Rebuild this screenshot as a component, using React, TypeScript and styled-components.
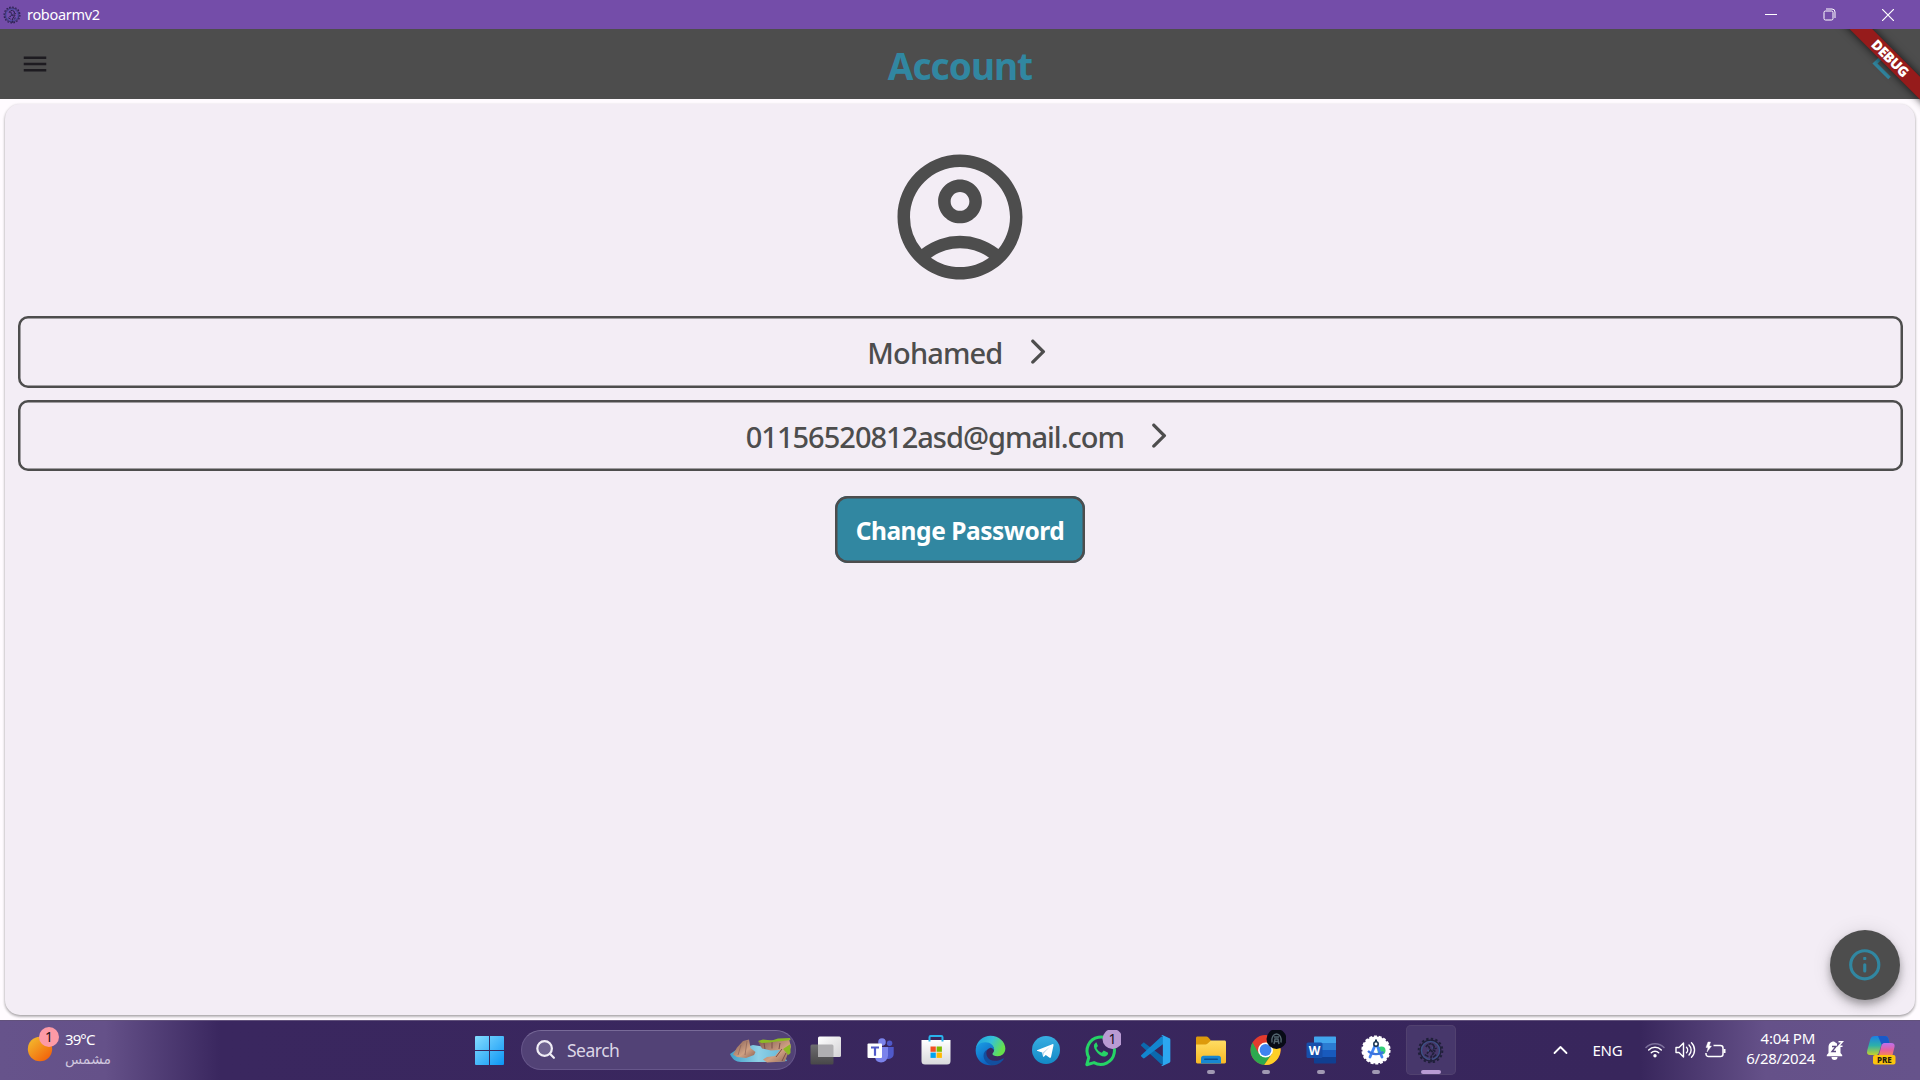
import React from "react";
import styled, { createGlobalStyle } from "styled-components";

const INK = "#4d4d4d";
const TEAL = "#3187a1";

const GlobalStyle = createGlobalStyle`
  * { box-sizing: border-box; }
  body { margin: 0; background: #fef7ff; overflow: hidden; }
  svg { display: block; flex: none; }
  button { font: inherit; color: inherit; background: none; border: 0; padding: 0; }
`;

const Desktop = styled.div`
  width: 1920px;
  height: 1080px;
  display: flex;
  flex-direction: column;
  font-family: "Noto Sans", "Open Sans", sans-serif;
  overflow: hidden;
`;

/* ---------- window title bar ---------- */
const TitleBar = styled.header`
  height: 29px;
  flex: none;
  display: flex;
  align-items: center;
  background: #744da9;
  color: #fff;
  padding: 0 3px;
`;
const WindowTitle = styled.span`
  flex: 1;
  margin-left: 6px;
  font-size: 14.5px;
  letter-spacing: -0.3px;
  line-height: 29px;
`;
const WindowButton = styled.button`
  width: 58.5px;
  height: 29px;
  display: grid;
  place-items: center;
`;

/* ---------- application ---------- */
const AppWindow = styled.div`
  flex: 1;
  position: relative;
  display: flex;
  flex-direction: column;
  background: #fffbff;
  overflow: hidden;
`;
const AppBar = styled.div`
  height: 70px;
  flex: none;
  display: grid;
  grid-template-columns: 70px 1fr 70px;
  align-items: center;
  background: ${INK};
`;
const AppBarButton = styled.button`
  height: 70px;
  display: grid;
  place-items: center;
`;
const PageTitle = styled.h1`
  margin: 0;
  padding-top: 3px;
  text-align: center;
  font-size: 37px;
  font-weight: 700;
  line-height: 50px;
  letter-spacing: -0.95px;
  color: ${TEAL};
`;
const Card = styled.main`
  flex: 1;
  margin: 4.5px 5px 5px;
  padding: 38.5px 12.5px 0;
  border-radius: 15px;
  background: #f3edf5;
  box-shadow: 0 1px 3px rgba(0, 0, 0, 0.28), 0 2px 3px rgba(0, 0, 0, 0.16);
  display: flex;
  flex-direction: column;
  align-items: center;
`;
const FieldList = styled.div`
  align-self: stretch;
  margin-top: 24.25px;
  display: flex;
  flex-direction: column;
  gap: 12.5px;
`;
const FieldRow = styled.button`
  height: 71.25px;
  display: flex;
  justify-content: center;
  align-items: center;
  gap: 19px;
  border-radius: 10px;
  box-shadow: inset 0 0 0 2.5px ${INK};
`;
const FieldText = styled.span<{ $tracking: number }>`
  padding-top: 2px;
  font-size: 29px;
  font-weight: 500;
  line-height: 40px;
  letter-spacing: ${(p) => p.$tracking}px;
  color: ${INK};
`;
const PasswordButton = styled.button`
  margin-top: 25px;
  padding-top: 2px;
  width: 250px;
  height: 66.25px;
  border-radius: 12.5px;
  background: ${TEAL};
  box-shadow: inset 0 0 0 2.5px ${INK};
  color: #fff;
  font-size: 24.5px;
  font-weight: 700;
  letter-spacing: -0.45px;
`;
const InfoButton = styled.button`
  position: absolute;
  right: 20px;
  bottom: 20px;
  width: 70px;
  height: 70px;
  border-radius: 50%;
  display: grid;
  place-items: center;
  background: ${INK};
  box-shadow: 0 4px 6px rgba(0, 0, 0, 0.2), 0 7px 12px rgba(0, 0, 0, 0.14), 0 1px 20px rgba(0, 0, 0, 0.1);
`;
const DebugRibbon = styled.div`
  position: absolute;
  top: 21.5px;
  right: -46px;
  width: 150px;
  height: 15.5px;
  padding-right: 2px;
  transform: rotate(45deg);
  background: #961b1b;
  box-shadow: 0 0 8px rgba(0, 0, 0, 0.75);
  color: #fff;
  text-align: center;
  font-size: 14px;
  font-weight: 900;
  letter-spacing: -0.5px;
  line-height: 15.5px;
`;

/* ---------- taskbar ---------- */
const Taskbar = styled.footer`
  height: 60px;
  flex: none;
  display: flex;
  align-items: center;
  border-top: 1px solid #62527c;
  background: linear-gradient(90deg, #66538b 0, #655189 105px, #3a275f 220px, #38265c 1640px, #655189 1765px, #66538b 1920px);
  color: #fff;
`;
const Weather = styled.div`
  width: 469px;
  padding-left: 27px;
  display: flex;
  align-items: center;
  gap: 6px;
  > svg { margin-bottom: 13px; }
`;
const TwoLines = styled.div<{ $end?: boolean }>`
  display: flex;
  flex-direction: column;
  align-items: ${(p) => (p.$end ? "flex-end" : "flex-start")};
  padding-bottom: 4px;
  font-size: 15px;
  line-height: 20px;
  letter-spacing: -0.28px;
`;
const Temperature = styled.span`
  font-size: 15px;
  letter-spacing: -0.9px;
`;
const Condition = styled.span`
  font-family: "DejaVu Sans", sans-serif;
  font-size: 14px;
  letter-spacing: 0;
  color: #cfc6de;
`;
const StartButton = styled.button`
  width: 40px;
  height: 50px;
  display: grid;
  place-items: center;
`;
const SearchBox = styled.div`
  width: 275px;
  height: 40px;
  margin: 0 8.5px 1px 12px;
  padding: 0 3px 0 14px;
  display: flex;
  align-items: center;
  border-radius: 20px;
  border: 1px solid #66568a;
  border-top-color: #786a98;
  background: #524276;
`;
const SearchLabel = styled.span`
  flex: 1;
  margin-left: 11px;
  font-size: 17.5px;
  letter-spacing: -0.5px;
  color: #dcd6e6;
`;
const AppStrip = styled.nav`
  display: flex;
  gap: 5px;
  margin: 0 0 1px -4px;
`;
const AppSlot = styled.button<{ $active?: boolean; $running?: boolean }>`
  position: relative;
  width: 50px;
  height: 50px;
  display: grid;
  place-items: center;
  border-radius: 5px;
  background: ${(p) => (p.$active ? "#47376b" : "transparent")};
  box-shadow: ${(p) => (p.$active ? "inset 0 0 0 1px #51416f" : "none")};
  &::after {
    content: "";
    display: ${(p) => (p.$active || p.$running ? "block" : "none")};
    position: absolute;
    bottom: 1px;
    left: 50%;
    transform: translateX(-50%);
    width: ${(p) => (p.$active ? 20 : 8)}px;
    height: 4px;
    border-radius: 2px;
    background: ${(p) => (p.$active ? "#b99bd3" : "#a199b3")};
  }
`;
const Tray = styled.div`
  flex: 1;
  display: flex;
  align-items: center;
  justify-content: flex-end;
  padding: 0 24px 2px 0;
`;
const Language = styled.span`
  margin: 0 23px 0 25px;
  font-size: 15px;
  letter-spacing: -0.3px;
`;
const TrayIcons = styled.div`
  display: flex;
  align-items: center;
  gap: 9.5px;
  margin-right: 20px;
`;
const TrayEnd = styled.div`
  display: flex;
  align-items: center;
  gap: 22px;
  margin-left: 11px;
`;

/* ---------- drawings ---------- */
const RobotGear = ({ size, ring = "#3a5689", body = "#20203a" }: { size: number; ring?: string; body?: string }) => (
  <svg width={size} height={size} viewBox="0 0 26 26" fill="none">
    <circle cx="13" cy="13" r="11.4" stroke={body} strokeWidth="1.9" strokeDasharray="2.3 2.17" />
    <circle cx="13" cy="13" r="10" stroke={body} strokeWidth="1.1" />
    <circle cx="13" cy="13" r="8.700" stroke={ring} strokeWidth="1.1" />
    <path d="M8.500 9.500l2.500-2.500 3-.8 2.600 2.300M11 8.500l2 4-3.500 3.500M16.600 8.500l-.8 4 2 1.800M13 12.500l3 3-2.500 3.500v5.500" stroke={body} strokeWidth="1.600" strokeDasharray="3 0.6" />
    <path d="M7.500 17l3.500 2M18.500 17l-3 2.600M17 11.500l2-.8" stroke={body} strokeWidth="1.400" />
    <path d="M10 12.500l1.500 1M14.500 10l1 1" stroke={ring} strokeWidth="1" />
  </svg>
);

const Chevron = () => (
  <svg width="31.25" height="31.25" viewBox="0 0 24 24" fill={INK}>
    <path d="M7.38 21.01c.49.49 1.28.49 1.77 0l8.31-8.31c.39-.39.39-1.02 0-1.41L9.15 2.98c-.49-.49-1.28-.49-1.77 0s-.49 1.28 0 1.77L14.62 12l-7.25 7.25c-.48.48-.48 1.28.01 1.76z" />
  </svg>
);

const SunIcon = () => (
  <svg width="32" height="36" viewBox="0 0 32 36">
    <defs>
      <linearGradient id="sun" x1="0.1" y1="0.1" x2="0.8" y2="0.9">
        <stop offset="0" stopColor="#f3b72c" />
        <stop offset="1" stopColor="#f2660c" />
      </linearGradient>
    </defs>
    <circle cx="13" cy="23" r="12.2" fill="url(#sun)" />
    <circle cx="22" cy="11" r="10" fill="#fd9aa6" />
    <text x="22" y="16" fontSize="14" textAnchor="middle" fill="#1d1014">1</text>
  </svg>
);

const StartIcon = () => (
  <svg width="29" height="29" viewBox="0 0 29 29">
    <defs>
      <linearGradient id="win" x1="0" y1="0" x2="1" y2="1" gradientUnits="objectBoundingBox">
        <stop offset="0" stopColor="#84dcff" />
        <stop offset="1" stopColor="#0c95f5" />
      </linearGradient>
    </defs>
    <path d="M1 0h13v14H0V1a1 1 0 0 1 1-1zM15 0h13a1 1 0 0 1 1 1v13H15zM0 15h14v14H1a1 1 0 0 1-1-1zM15 15h14v13a1 1 0 0 1-1 1H15z" fill="url(#win)" />
  </svg>
);

const SearchIcon = () => (
  <svg width="20" height="20" viewBox="0 0 20 20" fill="none" stroke="#f1eef6" strokeWidth="2.2" strokeLinecap="round">
    <circle cx="8.600" cy="8.500" r="7.300" fill="#6f6390" />
    <path d="M13.900 13.800l4 4" />
  </svg>
);

const RiverArt = () => (
  <svg width="63" height="26" viewBox="0 0 63 26">
    <defs>
      <linearGradient id="river" x1="0" x2="1">
        <stop offset="0" stopColor="#3f9fc9" />
        <stop offset="0.5" stopColor="#8fd0e6" />
        <stop offset="1" stopColor="#5cb4d6" />
      </linearGradient>
      <linearGradient id="rock" x1="0" x2="1" y2="1">
        <stop offset="0" stopColor="#7c5750" />
        <stop offset="0.6" stopColor="#d0a183" />
        <stop offset="1" stopColor="#8d6255" />
      </linearGradient>
    </defs>
    <path d="M1 17l6-4 17-5 12 2 16 2 6 12-10 1H12C7 25 3 22 1 17z" fill="url(#river)" />
    <path d="M4 17.500l4-7L14 4l6-1.500L21.500 11l5 4-1.500 3-8 3-9-1z" fill="url(#rock)" />
    <path d="M12 8l-3 10M18 4l-2 14" stroke="#8a6157" strokeWidth="0.700" />
    <path d="M29 4.500l9-1 22-1.500 2 8-4 9-2 5.500-18 1-4-3 4-2.500 8-1 5-6-9 .5-9-2z" fill="url(#rock)" />
    <path d="M35 6l1 6M43 5v6.500M51 6l-1 6M53 12l-6 8M57 16l-4 8" stroke="#7a5049" strokeWidth="1" />
    <path d="M29 4l5-1.500 9 1 6-2 12-.5.5 2-8 1-6 .5-7 1-8 .5zM54 12l7.500-5v9l-2 2z" fill="#8cba24" />
  </svg>
);

const TaskViewIcon = () => (
  <svg width="31" height="29" viewBox="0 0 31 29">
    <defs>
      <linearGradient id="tvb" x2="0" y2="1"><stop stopColor="#6e6d70" /><stop offset="1" stopColor="#484749" /></linearGradient>
      <linearGradient id="tvf" x2="1" y2="1"><stop stopColor="#fff" /><stop offset="1" stopColor="#d3d2d5" /></linearGradient>
    </defs>
    <rect x="0.5" y="8.5" width="23" height="20" rx="1.5" fill="url(#tvb)" />
    <rect x="8" y="0.5" width="23" height="20.5" rx="1.5" fill="url(#tvf)" />
    <path d="M8 8.5h14a1.5 1.5 0 0 1 1.5 1.5v11H9.5A1.5 1.5 0 0 1 8 19.500z" fill="#b0afb2" />
  </svg>
);

const TeamsIcon = () => (
  <svg width="27" height="25" viewBox="0 0 27 25">
    <circle cx="22.6" cy="5.2" r="2.7" fill="#5059c9" />
    <path d="M17 9h9.700v7a5 5 0 0 1-5 5H17z" fill="#5059c9" />
    <circle cx="15" cy="4" r="3.800" fill="#7b83eb" />
    <path d="M8 9h13v8.500a7 7 0 0 1-7 7 6.500 6.500 0 0 1-6-5z" fill="#7b83eb" />
    <rect x="0.500" y="5.500" width="14.500" height="14.500" rx="1" fill="#fff" />
    <path d="M4 8.500h8v2.100H9.100v7.100H6.900v-7.100H4z" fill="#5059c9" />
  </svg>
);

const StoreIcon = () => (
  <svg width="30" height="30" viewBox="0 0 30 30">
    <defs><linearGradient id="st" x2="0" y2="1"><stop stopColor="#fff" /><stop offset="1" stopColor="#d8d9dc" /></linearGradient></defs>
    <path d="M0.500 5h29v21a3.500 3.500 0 0 1-3.500 3.500H4A3.500 3.500 0 0 1 .5 26z" fill="url(#st)" />
    <path d="M8.500 6.500V2.200c0-.7.5-1.200 1.200-1.200h10.600c.7 0 1.200.5 1.200 1.200v4.300" fill="none" stroke="#29b3ec" strokeWidth="2" />
    <path d="M9.500 11.500h5.300v5.300H9.500z" fill="#f25022" />
    <path d="M15.600 11.500h5.300v5.300h-5.300z" fill="#7fba00" />
    <path d="M9.500 17.600h5.300v5.300H9.500z" fill="#00a4ef" />
    <path d="M15.600 17.600h5.300v5.300h-5.300z" fill="#ffb900" />
  </svg>
);

const EdgeIcon = () => (
  <svg width="31" height="31" viewBox="0 0 24 24">
    <defs>
      <linearGradient id="eg1" x1="0" x2="1" y2="0.4"><stop stopColor="#1d9de2" /><stop offset="0.55" stopColor="#35c1d8" /><stop offset="1" stopColor="#66e04b" /></linearGradient>
      <linearGradient id="eg2" x1="0" x2="0.6" y2="1"><stop stopColor="#1ba0e6" /><stop offset="1" stopColor="#0c5dbd" /></linearGradient>
    </defs>
    <path d="M.6 10.500C1.500 4.300 6.400.5 12 .5 18.500.5 23.500 5.200 23.500 10.500c0 3.700-2.800 6-6 6-2.600 0-4-.9-4-1.700 0-.7 1.300-1.300 1.300-3.300 0-2.800-2.800-5-6.300-5-3.500 0-6.500 1.500-7.900 4z" fill="url(#eg1)" />
    <path d="M.5 12c0-3.700 3.500-6.300 7.500-6.300 4 0 6.800 2.600 6.800 5.500 0 .3 0 .5-.1.800-.6-1.500-2-2.400-3.200-2-2.400.7-3.800 3.300-3.400 6.400.4 3.200 2.800 5.700 5.800 6.900C6.800 24.500.5 19.500.5 12z" fill="url(#eg2)" />
    <path d="M9.300 11.500c-1.600 3.500.4 8.500 6 8.500 2.500 0 4.600-.8 6.400-1.900.4-.2.7.2.4.6-2 3-5.200 4.800-8.600 4.800-4.200-1-6.900-4-6.900-7.400 0-2 1-3.700 2.700-4.600z" fill="#134f9f" />
  </svg>
);

const TelegramIcon = () => (
  <svg width="28" height="28" viewBox="0 0 24 24">
    <defs><linearGradient id="tg" x2="0" y2="1"><stop stopColor="#38aee2" /><stop offset="1" stopColor="#1389c6" /></linearGradient></defs>
    <circle cx="12" cy="12" r="12" fill="url(#tg)" />
    <path d="M4.800 11.900L17.400 7c.7-.2 1.200.2 1 1.100l-2.100 9.900c-.2.700-.6.900-1.200.6l-3.300-2.400-1.600 1.500c-.4.300-.8.200-.8-.3l-.7-3.300-3.900-1.200c-.7-.3-.7-.7 0-1z" fill="#fff" />
    <path d="M9 14.300l6.500-5.200-5.300 5.700-.4 2.400z" fill="#b8d6e9" />
  </svg>
);

const WhatsAppIcon = () => (
  <svg width="40" height="40" viewBox="0 0 40 40">
    <path d="M5.800 34.700l2-7.300a13.700 13.700 0 1 1 5.200 5.200z" fill="none" stroke="#25d366" strokeWidth="3" strokeLinejoin="round" />
    <path d="M14.200 13.200c-1.900 1.500-1.700 4.200.6 7.500 2.700 4 6.600 6.300 9.300 5.700 2.200-.4 3.100-2 3-3.600l-4.400-2.200-1.900 2.200c-2.400-.9-4.300-2.700-5.400-4.900l1.500-1.900-1.400-3.400c-.4-.4-.9-.1-1.300.6z" fill="#25d366" />
    <circle cx="31.500" cy="9" r="10" fill="#b99bd3" />
    <text x="31.500" y="14" fontSize="14" textAnchor="middle" fill="#171020">1</text>
  </svg>
);

const CodeIcon = () => (
  <svg width="31" height="31" viewBox="0 0 24 24">
    <path d="M1 7.300l1.300-1.200c.4-.3.900-.3 1.300 0L18 17v5.700c-.8.300-1.500.1-2-.4L.9 8.400c-.3-.4-.3-.8.1-1.100z" fill="#0b69ae" />
    <path d="M1 16.700l1.300 1.200c.4.300.9.300 1.300 0L18 7V1.300c-.8-.3-1.500-.1-2 .4L.9 15.600c-.3.400-.3.800.1 1.100z" fill="#1286cf" />
    <path d="M17.800.2l5 2.400c.5.200.7.600.7 1.100v16.600c0 .5-.2.900-.7 1.100l-5 2.400c-.6.300-1.300.1-1.800-.4.700.5 1.700 0 1.700-.9V1.500c0-.9-1-1.400-1.700-.9.500-.5 1.200-.7 1.800-.4z" fill="#2ca7f0" />
  </svg>
);

const FolderIcon = () => (
  <svg width="30" height="28" viewBox="0 0 30 28">
    <defs><linearGradient id="fo" x2="0" y2="1"><stop stopColor="#ffdd63" /><stop offset="1" stopColor="#f8b925" /></linearGradient></defs>
    <path d="M0 2C0 1 .6.500 1.500.500h9c.6 0 1 .2 1.400.6L15 4.500V11H0z" fill="#dd9a0c" />
    <path d="M0 8.500h9.500c.8 0 1.300-.2 1.900-.8L15 4.500h13.500c.9 0 1.500.6 1.500 1.500v20c0 .8-.6 1.400-1.500 1.400h-27C.6 27.400 0 26.800 0 26z" fill="url(#fo)" />
    <path d="M5 27.400v-5c0-1.600 1-2.600 2.600-2.600h14.800c1.600 0 2.600 1 2.600 2.600v5z" fill="#1787d2" />
    <rect x="8" y="22.500" width="14" height="1.500" rx="0.700" fill="#0b4f90" />
  </svg>
);

const ChromeIcon = () => (
  <svg width="40" height="40" viewBox="0 0 40 40">
    <circle cx="19.500" cy="20" r="15" fill="#e33b2e" />
    <path d="M6.500 12.500a15 15 0 0 0 11.700 22.450L26 23.750 13 23.750z" fill="#2da94f" />
    <path d="M32.500 12.500a15 15 0 0 1-14.300 22.450L26 23.750 19.500 12.500z" fill="#fdd028" />
    <circle cx="19.500" cy="20" r="7.500" fill="#fff" />
    <circle cx="19.500" cy="20" r="5.900" fill="#3f83f0" />
    <circle cx="30.500" cy="9" r="10" fill="#070b16" />
    <path d="M26 12.500c-1-5 1.500-8.500 4.500-8.500s5.500 3.500 4.500 8.500M28 14l1-5h3l1 5M29 11.500h3M28 7h5" fill="none" stroke="#52656f" strokeWidth="1.400" />
  </svg>
);

const WordIcon = () => (
  <svg width="30" height="28" viewBox="0 0 30 28">
    <path d="M8 1.500C8 .8 8.500.500 9 .500h20c.6 0 1 .4 1 1V7H8z" fill="#41a5ee" />
    <path d="M8 7h22v7H8z" fill="#2b7cd3" />
    <path d="M8 14h22v7H8z" fill="#185abd" />
    <path d="M8 21h22v5.500c0 .6-.4 1-1 1H9c-.6 0-1-.4-1-1z" fill="#103f91" />
    <rect x="0.500" y="6.500" width="16" height="15.500" rx="1.500" fill="#174fab" />
    <text x="8.500" y="18.500" fontSize="12" fontWeight="700" textAnchor="middle" fill="#fff">W</text>
  </svg>
);

const StudioIcon = () => (
  <svg width="30" height="30" viewBox="0 0 30 30">
    <circle cx="15" cy="15" r="13.600" fill="#fff" />
    <circle cx="15" cy="15" r="13.700" fill="none" stroke="#fff" strokeWidth="1.800" strokeDasharray="3 1.780" />
    <circle cx="20.500" cy="15.500" r="4" fill="#35cf78" />
    <path d="M14 10.500L9 22M16 10.500L21 22" stroke="#4285f4" strokeWidth="2.800" strokeLinecap="round" />
    <path d="M7 16c4 4 11 4 15.500 1" fill="none" stroke="#3b74dd" strokeWidth="2.200" />
    <path d="M15 4.500v3" stroke="#16324f" strokeWidth="2" />
    <circle cx="15" cy="9" r="2.200" fill="#fff" stroke="#16324f" strokeWidth="1.500" />
  </svg>
);

const CopilotIcon = () => (
  <svg width="30" height="30" viewBox="0 0 30 30">
    <defs>
      <linearGradient id="cp1" x2="0" y2="1"><stop stopColor="#1c7fe4" /><stop offset="0.5" stopColor="#2cb0a9" /><stop offset="1" stopColor="#c4d22c" /></linearGradient>
      <linearGradient id="cp2" x2="0" y2="1"><stop stopColor="#bc70ef" /><stop offset="0.6" stopColor="#e7609c" /><stop offset="1" stopColor="#f4835c" /></linearGradient>
    </defs>
    <path d="M9 1h10c2 0 3 1 3.500 3l1 4h-5c-2 0-3 1-3.500 3l-2.300 7c-.6 1.500-1.500 2-3 2H4.500c-3 0-4-1.500-3.300-4.500l3-11C5 2 6.500 1 9 1z" fill="url(#cp1)" />
    <path d="M12 1h7c2 0 3 1 3.500 3l1 4h-5l-3 1.500z" fill="#1a59c8" />
    <path d="M18.500 8H25c3 0 4 1.500 3.500 4l-2 8H13l2.200-8.500c.6-2.200 1.400-3.500 3.300-3.500z" fill="url(#cp2)" />
    <rect x="7" y="20" width="22.500" height="9.500" rx="2" fill="#fcc40d" />
    <text x="18.300" y="27.600" fontSize="8" fontWeight="800" textAnchor="middle" fill="#241b10">PRE</text>
  </svg>
);

export default function App() {
  return (
    <Desktop>
      <GlobalStyle />
      <TitleBar>
        <RobotGear size={18} ring="#3d4ea4" body="#2c2350" />
        <WindowTitle>roboarmv2</WindowTitle>
        <WindowButton aria-label="Minimize">
          <svg width="12" height="12" viewBox="0 0 12 12"><path d="M0 5h12v1H0z" fill="#fff" /></svg>
        </WindowButton>
        <WindowButton aria-label="Restore">
          <svg width="13" height="13" viewBox="0 0 13 13" fill="none" stroke="#fff">
            <rect x="1" y="3" width="9" height="9" rx="1.500" />
            <path d="M3 1h6a3 3 0 0 1 3 3v6" />
          </svg>
        </WindowButton>
        <WindowButton aria-label="Close">
          <svg width="12" height="12" viewBox="0 0 12 12" stroke="#fff" strokeWidth="1.200"><path d="M0 0l12 12M12 0L0 12" /></svg>
        </WindowButton>
      </TitleBar>

      <AppWindow>
        <AppBar>
          <AppBarButton aria-label="Menu">
            <svg width="30" height="30" viewBox="0 0 24 24" fill="#1d1b20"><path d="M3 18h18v-2H3v2zm0-5h18v-2H3v2zm0-7v2h18V6H3z" /></svg>
          </AppBarButton>
          <PageTitle>Account</PageTitle>
          <AppBarButton aria-label="Back">
            <svg width="30" height="36" viewBox="0 0 30 36" fill="none" stroke={TEAL} strokeWidth="3.600"><path d="M21.500 2L5 17.500 19.500 32" /></svg>
          </AppBarButton>
        </AppBar>
        <Card>
          <svg width="150" height="150" viewBox="0 0 24 24" fill={INK} fillRule="evenodd">
            <path d="M12 2C6.480 2 2 6.480 2 12s4.480 10 10 10 10-4.480 10-10S17.520 2 12 2zM7.350 18.500C8.660 17.560 10.260 17 12 17s3.340.56 4.650 1.500c-1.310.94-2.910 1.500-4.650 1.500s-3.340-.56-4.650-1.500zm10.790-1.380a9.947 9.947 0 0 0-12.280 0A7.957 7.957 0 0 1 4 12c0-4.420 3.580-8 8-8s8 3.580 8 8c0 1.950-.7 3.730-1.860 5.120z" />
            <path d="M12 6c-1.930 0-3.500 1.570-3.500 3.500S10.070 13 12 13s3.500-1.570 3.500-3.500S13.930 6 12 6zm0 5c-.83 0-1.500-.67-1.500-1.500S11.170 8 12 8s1.500.67 1.500 1.500S12.830 11 12 11z" />
          </svg>
          <FieldList>
            <FieldRow>
              <FieldText $tracking={-0.85}>Mohamed</FieldText>
              <Chevron />
            </FieldRow>
            <FieldRow>
              <FieldText $tracking={-1.0}>01156520812asd@gmail.com</FieldText>
              <Chevron />
            </FieldRow>
          </FieldList>
          <PasswordButton>Change Password</PasswordButton>
        </Card>
        <InfoButton aria-label="Information">
          <svg width="37.500" height="37.500" viewBox="0 0 24 24" fill="none" stroke={TEAL} strokeWidth="2" strokeLinecap="round">
            <circle cx="12" cy="12" r="9" />
            <path d="M12 12v4" />
            <rect x="11" y="7" width="2" height="2" rx="0.500" fill={TEAL} stroke="none" />
          </svg>
        </InfoButton>
        <DebugRibbon>DEBUG</DebugRibbon>
      </AppWindow>

      <Taskbar>
        <Weather>
          <SunIcon />
          <TwoLines>
            <Temperature>39°C</Temperature>
            <Condition>مشمس</Condition>
          </TwoLines>
        </Weather>
        <StartButton aria-label="Start"><StartIcon /></StartButton>
        <SearchBox>
          <SearchIcon />
          <SearchLabel>Search</SearchLabel>
          <RiverArt />
        </SearchBox>
        <AppStrip>
          <AppSlot><TaskViewIcon /></AppSlot>
          <AppSlot><TeamsIcon /></AppSlot>
          <AppSlot><StoreIcon /></AppSlot>
          <AppSlot><EdgeIcon /></AppSlot>
          <AppSlot><TelegramIcon /></AppSlot>
          <AppSlot><WhatsAppIcon /></AppSlot>
          <AppSlot><CodeIcon /></AppSlot>
          <AppSlot $running><FolderIcon /></AppSlot>
          <AppSlot $running><ChromeIcon /></AppSlot>
          <AppSlot $running><WordIcon /></AppSlot>
          <AppSlot $running><StudioIcon /></AppSlot>
          <AppSlot $active><RobotGear size={27} /></AppSlot>
        </AppStrip>
        <Tray>
          <svg width="15" height="10" viewBox="0 0 15 10" fill="none" stroke="#fff" strokeWidth="1.800" strokeLinecap="round" strokeLinejoin="round"><path d="M1.500 8l6-6 6 6" /></svg>
          <Language>ENG</Language>
          <TrayIcons>
            <svg width="20" height="16" viewBox="0 0 20 16" fill="none" stroke="#fff" strokeWidth="1.500" strokeLinecap="round">
              <path d="M1 5.500a12.500 12.500 0 0 1 18 0" stroke="#7d719c" />
              <path d="M3.700 8a8.800 8.800 0 0 1 12.600 0M6.300 10.800a5.200 5.200 0 0 1 7.400 0" />
              <circle cx="10" cy="13.700" r="1.700" fill="#fff" stroke="none" />
            </svg>
            <svg width="21" height="18" viewBox="0 0 21 18" fill="none" stroke="#fff" strokeWidth="1.400" strokeLinecap="round" strokeLinejoin="round">
              <path d="M1 6.500h3L8.500 2v14L4 11.500H1z" />
              <path d="M11.500 6.200a4 4 0 0 1 0 5.600M14 3.900a7.200 7.200 0 0 1 0 10.200M16.500 1.700a10.300 10.300 0 0 1 0 14.600" />
            </svg>
            <svg width="21" height="18" viewBox="0 0 21 18" fill="none" stroke="#fff" strokeWidth="1.500" strokeLinejoin="round">
              <path d="M8.500 4.500h7A2.500 2.500 0 0 1 18 7v6a2.500 2.500 0 0 1-2.500 2.500h-12A2.500 2.500 0 0 1 1 13v-1" />
              <path d="M19.500 8v4" strokeWidth="2" />
              <path d="M3 1L1 6.500h2L2 11l4.500-6H4.300L5.500 1z" fill="#fff" strokeWidth="0.400" />
            </svg>
          </TrayIcons>
          <TwoLines $end>
            <span>4:04 PM</span>
            <span>6/28/2024</span>
          </TwoLines>
          <TrayEnd>
            <svg width="18" height="20" viewBox="0 0 18 20" fill="#fff">
              <path d="M8 1.500C4.500 1.500 2.500 4 2.500 7.500V13L.8 15v1.200h15.400V15l-1.700-2V6zM5.500 17h6a3 3 0 0 1-6 0z" />
              <path d="M6 6.500h4L6 11.500h4" fill="none" stroke="#5c4a81" strokeWidth="1.400" />
              <path d="M11 0h7v7h-7z" fill="#65528a" />
              <path d="M12.500 1.700h4l-4 4.500h4" fill="none" stroke="#fff" strokeWidth="1.400" />
            </svg>
            <CopilotIcon />
          </TrayEnd>
        </Tray>
      </Taskbar>
    </Desktop>
  );
}
